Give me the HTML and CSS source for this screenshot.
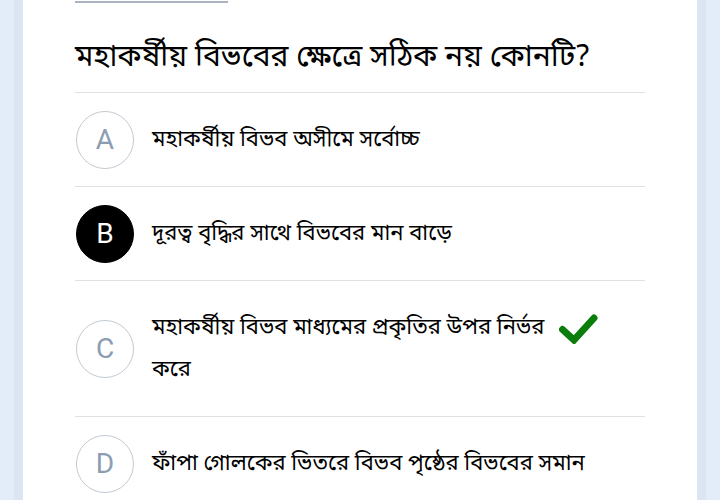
FILE: index.html
```html
<!DOCTYPE html>
<html lang="bn">
<head>
<meta charset="utf-8">
<title>প্রশ্ন</title>
<link rel="stylesheet" href="styles.css">
</head>
<body>
<div class="page">
  <div class="gutter"><div class="gutter-inner"></div></div>
  <main class="card">
    <div class="top-rule"></div>
    <h1 class="question">মহাকর্ষীয় বিভবের ক্ষেত্রে সঠিক নয় কোনটি?</h1>
    <ul class="options">
      <li class="option">
        <span class="badge">A</span>
        <span class="text">মহাকর্ষীয় বিভব অসীমে সর্বোচ্চ</span>
      </li>
      <li class="option">
        <span class="badge badge-selected">B</span>
        <span class="text">দূরত্ব বৃদ্ধির সাথে বিভবের মান বাড়ে</span>
      </li>
      <li class="option">
        <span class="badge">C</span>
        <span class="text text-narrow">মহাকর্ষীয় বিভব মাধ্যমের প্রকৃতির উপর নির্ভর করে</span>
        <svg class="check" viewBox="0 0 40 30" width="40" height="30" aria-hidden="true">
          <polyline points="3.5,15.5 15,26 35,4" fill="none" stroke="#0b7d0b" stroke-width="7" stroke-linecap="round" stroke-linejoin="miter"/>
        </svg>
      </li>
      <li class="option">
        <span class="badge">D</span>
        <span class="text">ফাঁপা গোলকের ভিতরে বিভব পৃষ্ঠের বিভবের সমান</span>
      </li>
    </ul>
  </main>
  <div class="gutter gutter-right"><div class="gutter-inner"></div></div>
</div>
</body>
</html>
```
FILE: styles.css
```css
html, body {
  margin: 0;
  padding: 0;
}
body {
  width: 720px;
  height: 500px;
  overflow: hidden;
  background: #e3edf9;
  font-family: "Noto Sans Bengali", "Noto Serif Bengali", "Lohit Bengali", "FreeSerif", "Noto Sans", sans-serif;
}
.page {
  display: flex;
  height: 500px;
}
.gutter {
  width: 23px;
  display: flex;
  justify-content: flex-end;
}
.gutter-right {
  justify-content: flex-start;
}
.gutter-inner {
  width: 9px;
  background: #dce6f3;
}
.card {
  flex: 1;
  background: #ffffff;
  padding: 0 52px;
}
.top-rule {
  width: 153px;
  height: 2px;
  margin-top: 1px;
  background: #aab4be;
}
.question {
  margin: 0;
  height: 90px;
  display: flex;
  align-items: center;
  font-size: 30px;
  font-weight: normal;
  color: #000;
  border-bottom: 1px solid #dde1e5;
  box-sizing: border-box;
  padding-top: 20px;
}
.options {
  list-style: none;
  margin: 0;
  padding: 0;
}
.option {
  display: flex;
  align-items: center;
  padding: 17px 0 17px 1px;
  border-bottom: 1px solid #dde1e5;
}
.badge {
  flex: none;
  width: 56px;
  height: 56px;
  border: 1px solid #c3cad2;
  border-radius: 50%;
  display: flex;
  align-items: center;
  justify-content: center;
  font-family: Roboto, "Liberation Sans", sans-serif;
  font-size: 28px;
  font-weight: 400;
  color: #8d9db1;
  margin-right: 18px;
}
.badge-selected {
  background: #000;
  border-color: #000;
  color: #fff;
}
.text {
  font-size: 22px;
  line-height: 42px;
  padding: 10px 0 7px;
  color: #000;
}
.text-narrow {
  width: 395px;
}
.check {
  flex: none;
  align-self: flex-start;
  margin-top: 16px;
  margin-left: 12px;
}
```
